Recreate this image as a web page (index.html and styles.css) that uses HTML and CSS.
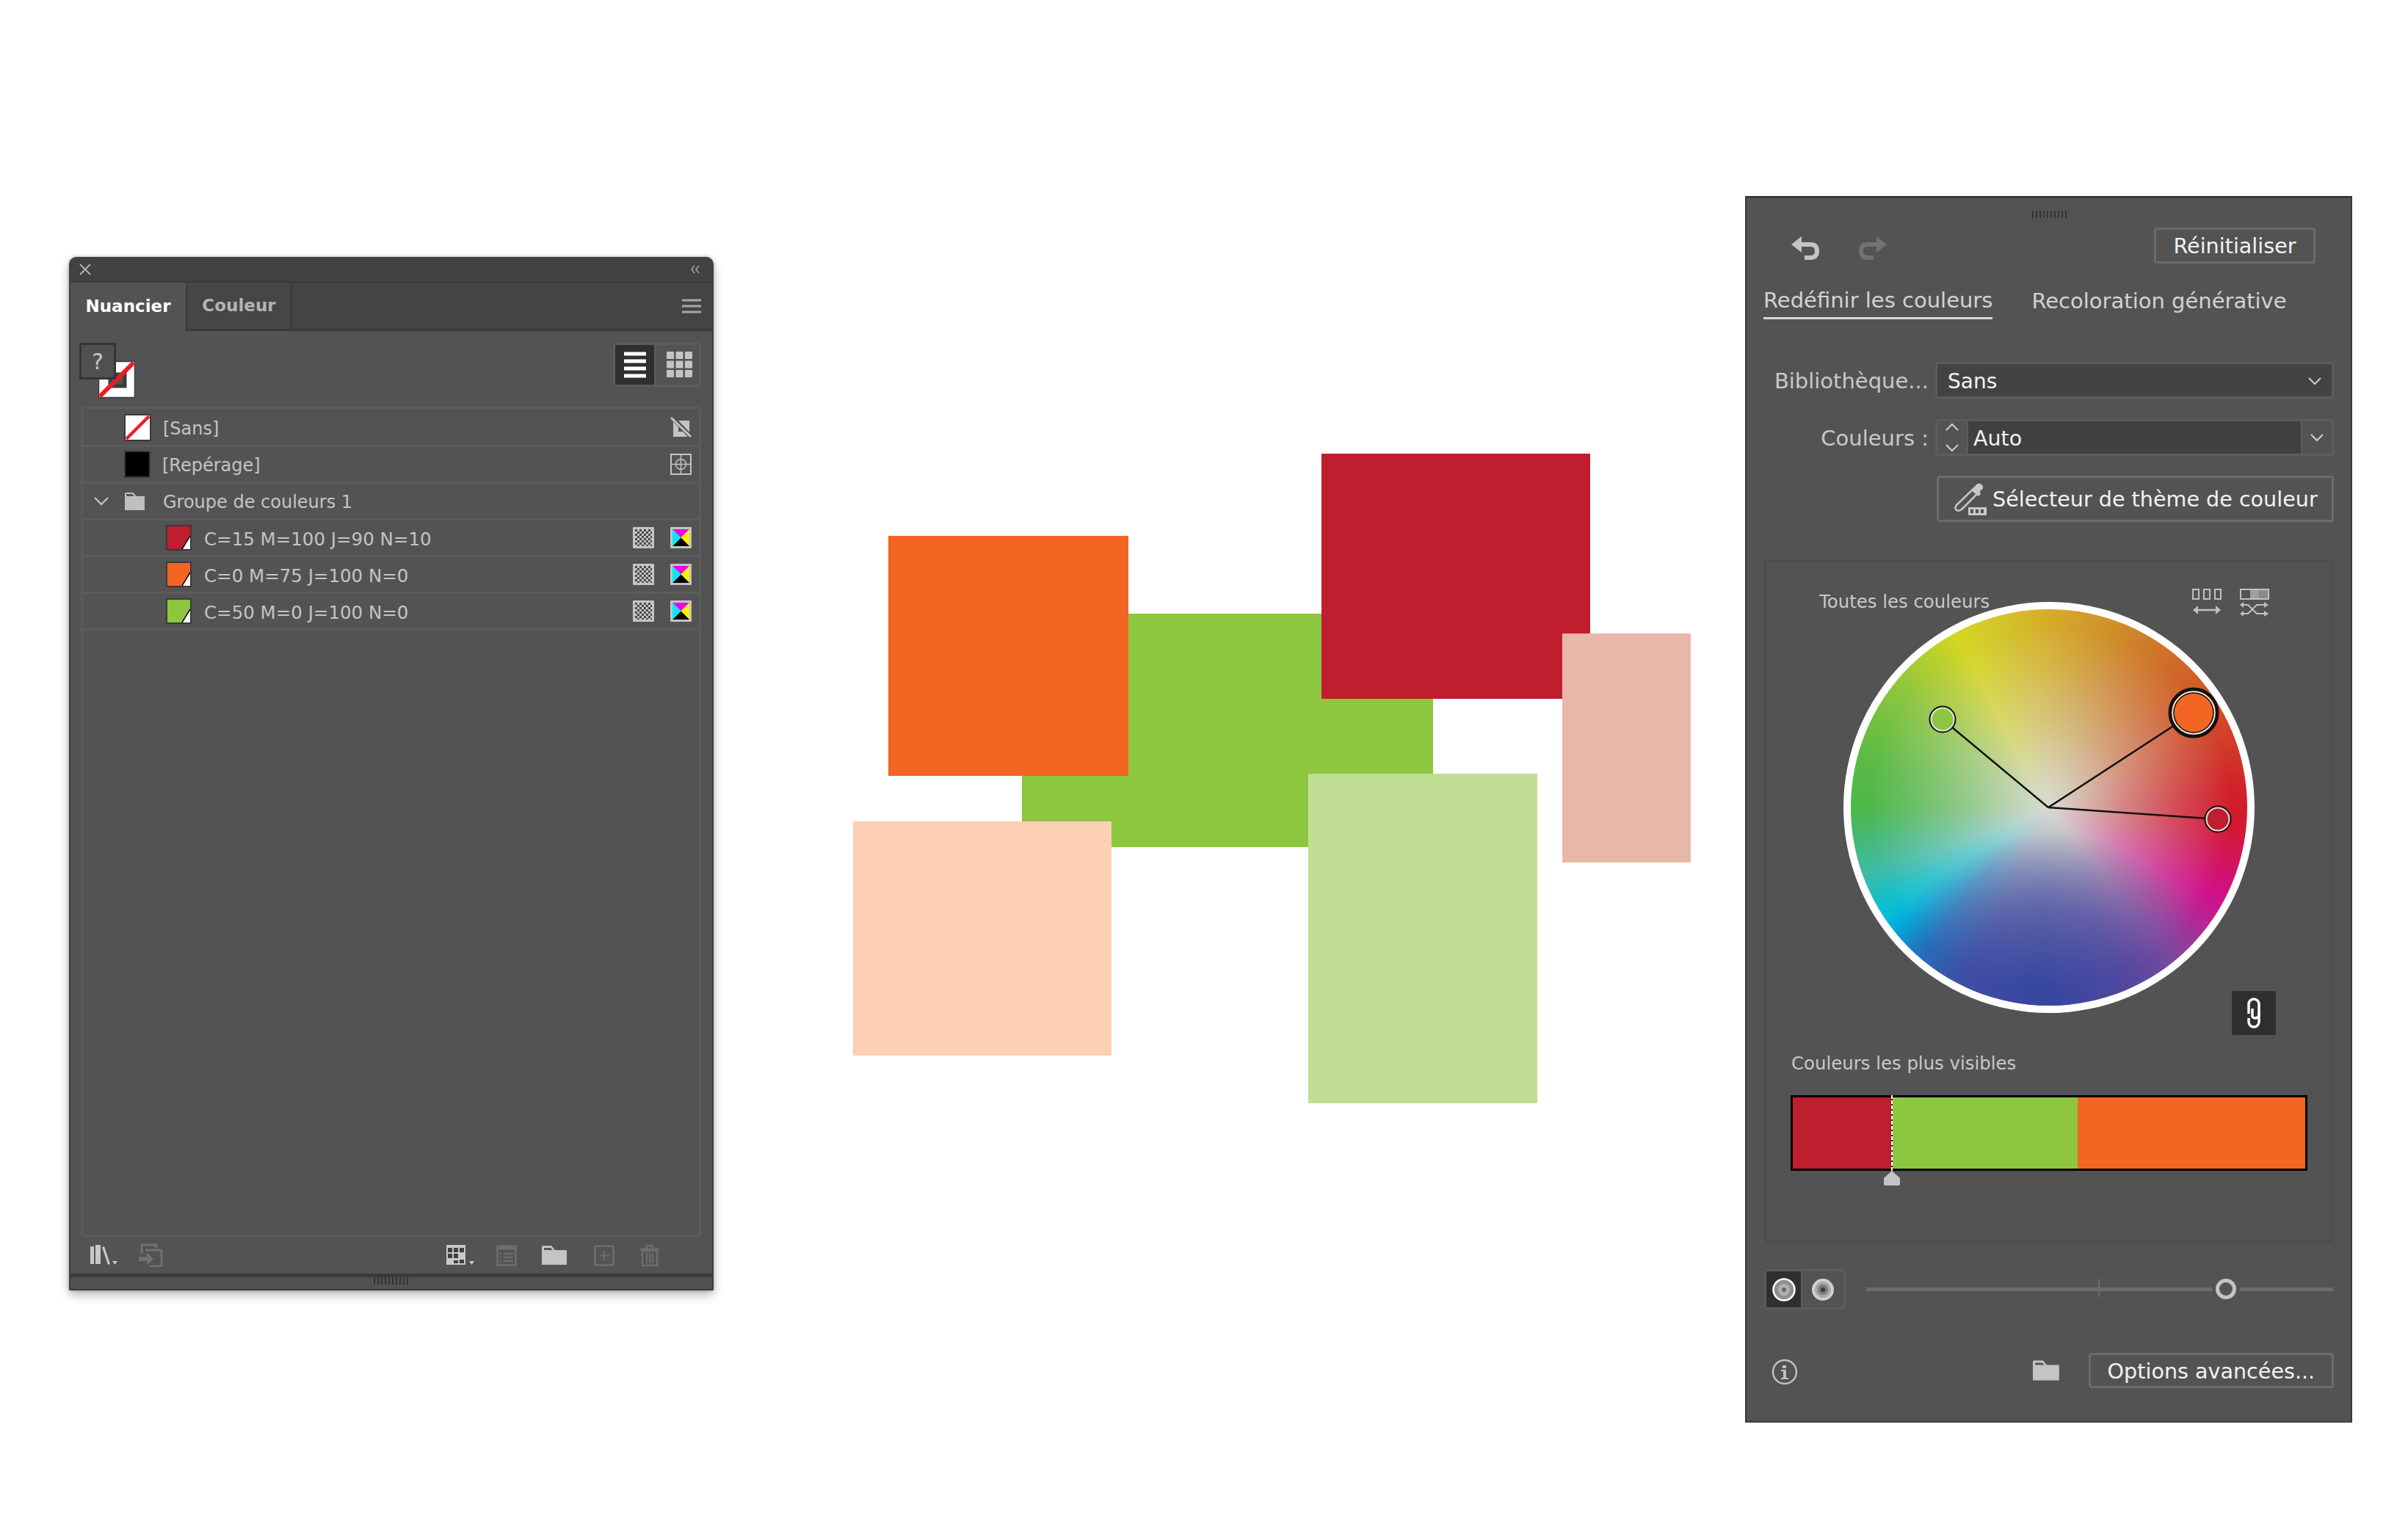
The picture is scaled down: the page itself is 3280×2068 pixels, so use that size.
FILE: index.html
```html
<!DOCTYPE html>
<html lang="fr">
<head>
<meta charset="utf-8">
<title>Redéfinir les couleurs</title>
<link rel="stylesheet" href="styles.css">
</head>
<body>
<main class="desk">

  <div class="shape s-green"></div>
  <div class="shape s-orange"></div>
  <div class="shape s-red"></div>
  <div class="shape s-pred"></div>
  <div class="shape s-porange"></div>
  <div class="shape s-pgreen"></div>

  <section class="swatches">
    <header class="sw-title">
      <svg class="ic" width="16" height="16" viewBox="0 0 16 16"><path d="M1 1l14 14M15 1L1 15" stroke="#b4b4b4" stroke-width="1.8" fill="none"/></svg>
      <svg class="ic" width="14" height="12" viewBox="0 0 14 12"><path d="M6 1L2 6l4 5M12 1L8 6l4 5" stroke="#a8a8a8" stroke-width="1.5" fill="none"/></svg>
    </header>
    <nav class="sw-tabs">
      <span class="sw-tab on">Nuancier</span>
      <span class="sw-tab">Couleur</span>
      <svg class="sw-menu" width="26" height="20" viewBox="0 0 26 20"><path d="M0 2h26M0 10h26M0 18h26" stroke="#a8a8a8" stroke-width="3"/></svg>
    </nav>
    <div class="sw-tools">
      <svg class="fillstroke" width="76" height="76" viewBox="0 0 76 76">
        <rect x="26.500" y="25.500" width="49" height="49" fill="#fff" stroke="#3c3c3c" stroke-width="1.500"/>
        <rect x="42" y="43" width="20" height="16" fill="#535353" stroke="#3a3a3a" stroke-width="5"/>
        <path d="M28 73L74 27" stroke="#ec1c24" stroke-width="6"/>
        <rect x="1.500" y="1.500" width="47" height="47" fill="#505050" stroke="#353535" stroke-width="3"/>
      </svg>
      <span class="qmark">?</span>
      <div class="views">
        <span class="view on">
          <svg width="32" height="36" viewBox="0 0 32 36"><path d="M1 3h30M1 13h30M1 23h30M1 33h30" stroke="#fff" stroke-width="5"/></svg>
        </span>
        <span class="view grid">
          <svg width="36" height="36" viewBox="0 0 36 36" fill="#c4c4c4"><rect width="10" height="10" rx="1"/><rect x="12.500" width="10" height="10" rx="1"/><rect x="25" width="10" height="10" rx="1"/><rect y="12.500" width="10" height="10" rx="1"/><rect x="12.500" y="12.500" width="10" height="10" rx="1"/><rect x="25" y="12.500" width="10" height="10" rx="1"/><rect y="25" width="10" height="10" rx="1"/><rect x="12.500" y="25" width="10" height="10" rx="1"/><rect x="25" y="25" width="10" height="10" rx="1"/></svg>
        </span>
      </div>
    </div>
    <div class="sw-list">
      <div class="row">
        <svg class="chip" width="37" height="37" viewBox="0 0 37 37"><rect x="1" y="1" width="35" height="35" fill="#fff" stroke="#3a3a3a" stroke-width="2"/><path d="M3 34L34 3" stroke="#ec1c24" stroke-width="4.500"/></svg>
        <span class="name">[Sans]</span>
        <svg class="end" width="29" height="29" viewBox="0 0 29 29"><path d="M4 5h22v22H4z" fill="#c4c4c4"/><path d="M11 12h8v8h-8z" fill="#535353"/><path d="M2 0l26 27" stroke="#535353" stroke-width="6"/><path d="M1 1l27 26" stroke="#c4c4c4" stroke-width="3"/></svg>
      </div>
      <div class="row">
        <span class="chip blk"></span>
        <span class="name">[Repérage]</span>
        <svg class="end" width="29" height="29" viewBox="0 0 29 29"><rect x="1" y="1" width="27" height="27" fill="none" stroke="#c4c4c4" stroke-width="2"/><circle cx="14.500" cy="14.500" r="7" fill="none" stroke="#c4c4c4" stroke-width="1.500"/><path d="M14.500 1v27M1 14.500h27" stroke="#c4c4c4" stroke-width="1.500"/></svg>
      </div>
      <div class="row">
        <svg class="twist" width="20" height="12" viewBox="0 0 20 12"><path d="M1 1l9 9 9-9" fill="none" stroke="#c8c8c8" stroke-width="2"/></svg>
        <svg class="gfolder" width="28" height="24" viewBox="0 0 28 24"><path d="M1 2q0-2 2-2h9l5 5h11v19H1z" fill="#c0c0c0"/><path d="M3 2h8l3 3H3z" fill="#535353"/></svg>
        <span class="name">Groupe de couleurs 1</span>
      </div>
      <div class="row sub">
        <svg class="chip" width="35" height="35" viewBox="0 0 35 35"><rect x="1" y="1" width="33" height="33" fill="#be1e2d" stroke="#3a3a3a" stroke-width="2"/><path d="M33 15v18H22z" fill="#fff"/><path d="M33 15L22 33" stroke="#000" stroke-width="1.500"/></svg>
        <span class="name">C=15 M=100 J=90 N=10</span>
        <svg class="end" width="29" height="29"><use href="#chk"/></svg>
        <svg class="end" width="29" height="29"><use href="#cmyk"/></svg>
      </div>
      <div class="row sub">
        <svg class="chip" width="35" height="35" viewBox="0 0 35 35"><rect x="1" y="1" width="33" height="33" fill="#f36523" stroke="#3a3a3a" stroke-width="2"/><path d="M33 15v18H22z" fill="#fff"/><path d="M33 15L22 33" stroke="#000" stroke-width="1.500"/></svg>
        <span class="name">C=0 M=75 J=100 N=0</span>
        <svg class="end" width="29" height="29"><use href="#chk"/></svg>
        <svg class="end" width="29" height="29"><use href="#cmyk"/></svg>
      </div>
      <div class="row sub">
        <svg class="chip" width="35" height="35" viewBox="0 0 35 35"><rect x="1" y="1" width="33" height="33" fill="#8dc63f" stroke="#3a3a3a" stroke-width="2"/><path d="M33 15v18H22z" fill="#fff"/><path d="M33 15L22 33" stroke="#000" stroke-width="1.500"/></svg>
        <span class="name">C=50 M=0 J=100 N=0</span>
        <svg class="end" width="29" height="29"><use href="#chk"/></svg>
        <svg class="end" width="29" height="29"><use href="#cmyk"/></svg>
      </div>
    </div>
    <footer class="sw-foot">
      <svg class="f-lib" width="37" height="28" viewBox="0 0 37 28"><path d="M0 2h5v24H0zM7 0h7v26H7zM16 3l3-1 8 24-3 1z" fill="#c8c8c8"/><path d="M30 22h7l-3.500 5z" fill="#c8c8c8"/></svg>
      <svg class="f-place" width="34" height="32" viewBox="0 0 34 32"><path d="M4 14V2h20v4M9 9h22v22H15" fill="none" stroke="#717171" stroke-width="3"/><path d="M0 18h11v-6l9 9-9 9v-6H0z" fill="#717171"/></svg>
      <svg class="f-kinds" width="38" height="28" viewBox="0 0 38 28"><rect width="26" height="27" fill="#c8c8c8"/><path d="M2 4h6v6H2zM10 4h6v6h-6zM18 4h6v6h-6zM2 12h6v6H2zM10 12h6v6h-6zM10 21h6v4h-6zM18 20h6v5h-6z" fill="#3e3e3e"/><path d="M31 22h7l-3.500 5z" fill="#c8c8c8"/></svg>
      <svg class="f-opts" width="28" height="29" viewBox="0 0 28 29"><rect x="1.500" y="1.500" width="25" height="26" fill="none" stroke="#6e6e6e" stroke-width="2.500"/><path d="M1 4h26" stroke="#6e6e6e" stroke-width="5"/><path d="M5 12h2M5 17h2M5 22h2M10 12h13M10 17h13M10 22h13" stroke="#6e6e6e" stroke-width="2.500"/></svg>
      <svg class="f-folder" width="34" height="26" viewBox="0 0 34 26"><use href="#fold"/></svg>
      <svg class="f-new" width="28" height="29" viewBox="0 0 28 29"><rect x="1.500" y="1.500" width="25" height="26" rx="1" fill="none" stroke="#6e6e6e" stroke-width="2.500"/><path d="M14 8v13M8 14.500h13" stroke="#6e6e6e" stroke-width="2"/></svg>
      <svg class="f-trash" width="28" height="30" viewBox="0 0 28 30"><path d="M1 7h26M10 6V2h8v4" fill="none" stroke="#6e6e6e" stroke-width="2.500"/><path d="M4 9h20v20H4z" fill="none" stroke="#6e6e6e" stroke-width="2.500"/><path d="M10 12v14M14 12v14M18 12v14" stroke="#6e6e6e" stroke-width="2"/></svg>
    </footer>
    <div class="sw-grip"><span class="grip"></span></div>
  </section>

  <section class="recolor">
    <div class="rc-grip"><span class="grip thin"></span></div>
    <div class="rc-top">
      <svg class="undo" width="40" height="34" viewBox="0 0 40 34"><path d="M14 0v8h12q12 0 12 12t-12 12h-8v-6h8q6 0 6-6t-6-6H14v8L0 11z" fill="#c4c4c4"/></svg>
      <svg class="redo" width="40" height="34" viewBox="0 0 40 34"><path d="M26 0v8H14Q2 8 2 20t12 12h8v-6h-8q-6 0-6-6t6-6h12v8l14-11z" fill="#727272"/></svg>
      <span class="btn reset">Réinitialiser</span>
    </div>
    <div class="rc-tabs">
      <span class="rc-tab on">Redéfinir les couleurs</span>
      <span class="rc-tab">Recoloration générative</span>
    </div>
    <div class="field lib">
      <label class="lbl">Bibliothèque...</label>
      <div class="select"><span>Sans</span><svg width="18" height="11" viewBox="0 0 18 11"><path d="M1 1l8 8 8-8" fill="none" stroke="#d0d0d0" stroke-width="2"/></svg></div>
    </div>
    <div class="field cnt">
      <label class="lbl">Couleurs :</label>
      <div class="combo">
        <span class="step"><svg width="20" height="48" viewBox="0 0 20 48"><path d="M2 14l8-8 8 8M2 34l8 8 8-8" fill="none" stroke="#d0d0d0" stroke-width="2"/></svg></span>
        <span class="cval">Auto</span>
        <span class="cdrop"><svg width="18" height="11" viewBox="0 0 18 11"><path d="M1 1l8 8 8-8" fill="none" stroke="#d0d0d0" stroke-width="2"/></svg></span>
      </div>
    </div>
    <div class="btn picker">
      <svg width="46" height="44" viewBox="0 0 46 44"><path d="M30 6l6 6-24 24q-4 3-7 1t0-7z" fill="none" stroke="#c8c8c8" stroke-width="2.500"/><path d="M26 11l4-4 1-4q4-4 8-1t1 7l-4 2 2 4-3 3z" fill="#c8c8c8"/><rect x="21" y="33" width="25" height="11" fill="#c8c8c8"/><path d="M24 36h4v5h-4zM31 36h4v5h-4zM38 36h4v5h-4z" fill="#535353"/></svg>
      <span>Sélecteur de thème de couleur</span>
    </div>
    <div class="harmony">
      <span class="cap all">Toutes les couleurs</span>
      <div class="wheel-tools">
        <svg width="40" height="36" viewBox="0 0 40 36" fill="none" stroke="#c0c0c0"><path d="M1 1h8v13H1zM16 1h8v13h-8zM31 1h8v13h-8z" stroke-width="2"/><path d="M6 29h28" stroke-width="2.500"/><path d="M8 23l-7 6 7 6zM32 23l7 6-7 6z" fill="#c0c0c0" stroke="none"/></svg>
        <svg width="40" height="36" viewBox="0 0 40 36" fill="none" stroke="#c0c0c0"><path d="M1 1h38v13H1z" stroke-width="2"/><path d="M14 2h12v11H14z" fill="#a0a0a0" stroke="none"/><path d="M26 2h12v11H26z" fill="#8a8a8a" stroke="none"/><path d="M3 22h8l12 12h12M3 34h8l12-12h12" stroke-width="2"/><path d="M33 18l6 4-6 4zM33 30l6 4-6 4zM5 18l-5 4 5 4zM5 30l-5 4 5 4z" fill="#c0c0c0" stroke="none"/></svg>
      </div>
      <div class="wheel">
        <div class="hue"></div>
        <div class="sat"></div>
        <svg class="spokes" width="560" height="560" viewBox="0 0 560 560">
          <path d="M279 280L135 160M279 280L477 151M279 280L510 296" stroke="#111" stroke-width="2.500" fill="none"/>
          <g stroke="#111" stroke-width="2">
            <circle cx="135" cy="160" r="16" fill="#8dc63f" stroke="#e6e6e6" stroke-width="3"/>
            <circle cx="135" cy="160" r="17.500" fill="none"/>
            <circle cx="510" cy="296" r="16" fill="#be1e2d" stroke="#f0dcdc" stroke-width="3"/>
            <circle cx="510" cy="296" r="17.500" fill="none"/>
          </g>
          <circle cx="477" cy="151" r="32" fill="none" stroke="#111" stroke-width="5"/>
          <circle cx="477" cy="151" r="28.500" fill="none" stroke="#fbe3d8" stroke-width="2.500"/>
          <circle cx="477" cy="151" r="27" fill="#f36523" stroke="#111" stroke-width="1.500"/>
        </svg>
      </div>
      <span class="link"><svg width="22" height="42" viewBox="0 0 22 42" fill="none" stroke="#fff" stroke-width="3.500"><path d="M4 22V9a7 7 0 0 1 14 0v14a5 5 0 0 1-9 3V15"/><path d="M18 20v13a7 7 0 0 1-14 0V28"/></svg></span>
      <span class="cap vis">Couleurs les plus visibles</span>
      <div class="bar">
        <span class="b-red"></span><span class="b-green"></span><span class="b-orange"></span>
        <span class="dash"></span>
        <svg class="stop" width="22" height="20" viewBox="0 0 22 20"><path d="M11 0l11 10v8q0 2-2 2H2q-2 0-2-2v-8z" fill="#c4c4c4"/></svg>
      </div>
    </div>
    <div class="sliderrow">
      <div class="mode">
        <span class="m on"><svg width="32" height="32" viewBox="0 0 32 32"><circle cx="16" cy="16" r="14" fill="#8f8f8f"/><circle cx="16" cy="16" r="8" fill="#b0b0b0"/><circle cx="16" cy="16" r="3" fill="#6a6a6a"/><circle cx="16" cy="16" r="14.500" fill="none" stroke="#fff" stroke-width="2.500"/></svg></span>
        <span class="m"><svg width="32" height="32" viewBox="0 0 32 32"><circle cx="16" cy="16" r="15" fill="#d0d0d0"/><circle cx="16" cy="16" r="11" fill="#a8a8a8"/><circle cx="16" cy="16" r="7" fill="#7a7a7a"/><circle cx="16" cy="16" r="3" fill="#3c3c3c"/></svg></span>
      </div>
      <div class="track">
        <span class="tick"></span>
        <span class="knob"></span>
      </div>
    </div>
    <div class="rc-foot">
      <svg width="36" height="36" viewBox="0 0 36 36"><circle cx="18" cy="18" r="16" fill="none" stroke="#c0c0c0" stroke-width="2.500"/><path d="M15 9h5v4h-5zM13 15h7v11h3v2H13v-2h3v-9h-3z" fill="#c0c0c0"/></svg>
      <svg class="rf-folder" width="36" height="28" viewBox="0 0 34 26"><use href="#fold"/></svg>
      <span class="btn adv">Options avancées...</span>
    </div>
  </section>

  <svg class="defs" width="0" height="0">
    <defs>
      <pattern id="ck" width="6" height="6" patternUnits="userSpaceOnUse"><rect width="6" height="6" fill="#c4c4c4"/><rect width="3" height="3" fill="#4a4a4a"/><rect x="3" y="3" width="3" height="3" fill="#4a4a4a"/></pattern>
      <symbol id="chk" viewBox="0 0 29 29"><rect width="29" height="29" rx="1" fill="#c4c4c4"/><rect x="3" y="3" width="23" height="23" fill="url(#ck)"/></symbol>
      <symbol id="cmyk" viewBox="0 0 29 29"><rect width="29" height="29" rx="1" fill="#c4c4c4"/><path d="M3 3h23L14.500 14.500z" fill="#ec00e8"/><path d="M26 3v23L14.500 14.500z" fill="#fff200"/><path d="M3 26h23L14.500 14.500z" fill="#000"/><path d="M3 3v23l11.500-11.500z" fill="#00eaf8"/></symbol>
      <symbol id="fold" viewBox="0 0 34 26"><path d="M0 2q0-2 2-2h11l5 6h16v20H0z" fill="#c4c4c4"/><path d="M3 3h9l3 3H3z" fill="#535353"/></symbol>
    </defs>
  </svg>
</main>
</body>
</html>
```
FILE: styles.css
```css
* { box-sizing: border-box; }
html, body { margin: 0; padding: 0; background: #fff; }
body { font-family: "DejaVu Sans", "Noto Sans", sans-serif; }
.desk { position: relative; width: 3280px; height: 2068px; overflow: hidden; background: #fff; }

.shape { position: absolute; }
.s-green { left: 1392px; top: 836px; width: 560px; height: 318px; background: #8dc63f; }
.s-orange { left: 1210px; top: 730px; width: 327px; height: 327px; background: #f36523; }
.s-red { left: 1800px; top: 618px; width: 366px; height: 334px; background: #be1e2d; }
.s-pred { left: 2128px; top: 863px; width: 175px; height: 312px; background: #e8b7a9; }
.s-porange { left: 1162px; top: 1119px; width: 352px; height: 319px; background: #fdd0b4; }
.s-pgreen { left: 1782px; top: 1054px; width: 312px; height: 449px; background: #c1de95; }

/* Nuancier panel */
.swatches { position: absolute; left: 94px; top: 350px; width: 878px; height: 1408px; display: flex; flex-direction: column; background: #535353; border-radius: 10px 10px 2px 2px; box-shadow: 0 6px 14px rgba(0,0,0,.28), 0 0 4px rgba(0,0,0,.25); border: solid #3f3f3f; border-width: 0 2px 2px 2px; overflow: visible; }
.sw-title { height: 33px; display: flex; align-items: center; justify-content: space-between; padding: 0 16px 0 12px; background: #424242; border-radius: 10px 10px 0 0; flex: none; }
.sw-tabs { height: 68px; display: flex; align-items: stretch; background: #444; border-top: 2px solid #3a3a3a; border-bottom: 3px solid #3a3a3a; flex: none; position: relative; }
.sw-tab { width: 143px; display: flex; align-items: center; justify-content: center; font-size: 23px; font-weight: 700; color: #b4b4b4; border-right: 2px solid #3a3a3a; background: #464646; padding-bottom: 2px; }
.sw-tab.on { width: 159px; color: #fff; background: #535353; margin-bottom: -3px; border-right: 2px solid #3a3a3a; }
.sw-menu { position: absolute; right: 15px; top: 22px; }
.sw-tools { height: 103px; flex: none; display: flex; justify-content: space-between; padding: 16px 15px 0 12px; position: relative; }
.fillstroke { display: block; }
.qmark { position: absolute; left: 12px; top: 16px; width: 50px; height: 50px; display: flex; align-items: center; justify-content: center; color: #c8c8c8; font-size: 30px; }
.views { width: 120px; height: 60px; display: flex; border: 3px solid #5c5c5c; border-radius: 4px; }
.view { display: flex; align-items: center; justify-content: center; }
.view.on { width: 56px; background: #2f2f2f; border-right: 3px solid #5c5c5c; flex: none; }
.view.grid { flex: 1; padding-left: 6px; }

.sw-list { flex: none; height: 1131px; margin: 0 15px 0 14px; padding-top: 2px; border: 3px solid #5b5b5b; border-radius: 5px; }
.row { height: 50px; display: flex; align-items: center; border-bottom: 3px solid #5b5b5b; padding-right: 10px; font-size: 24px; color: #c4c4c4; position: relative; }
.row .chip { margin-left: 56px; flex: none; }
.row .blk { width: 36px; height: 37px; background: #000; border: 2px solid #3a3a3a; }
.row .name { margin-left: 16px; flex: 1; white-space: nowrap; padding-top: 3px; }
.row.sub { font-size: 24.5px; }
.row.sub .chip { margin-left: 113px; }
.row.sub .name { margin-left: 17px; }
.row .end { flex: none; display: block; }
.row .end + .end { margin-left: 22px; }
.twist { margin-left: 15px; flex: none; }
.gfolder { margin-left: 21px; flex: none; }
.row .gfolder + .name { margin-left: 25px; }

.sw-foot { height: 50px; flex: none; display: flex; align-items: center; }
.f-lib { margin-left: 27px; }
.f-place { margin-left: 29px; }
.f-kinds { margin-left: 385px; }
.f-opts { margin-left: 30px; }
.f-folder { margin-left: 34px; }
.f-new { margin-left: 37px; }
.f-trash { margin-left: 34px; }
.sw-grip { flex: 1; border-top: 5px solid #3a3a3a; background: #515151; display: flex; justify-content: center; }
.grip { display: block; width: 48px; height: 10px; background: repeating-linear-gradient(90deg, #333 0 2px, transparent 2px 5px); }
.grip.thin { height: 10px; width: 49px; }

/* Recolor panel */
.recolor { position: absolute; left: 2377px; top: 267px; width: 827px; height: 1671px; background: #535353; border: 3px solid #3a3a3a; border-width: 3px 2px 2px 2px; display: flex; flex-direction: column; padding: 0 24px; }
.rc-grip { height: 27px; flex: none; display: flex; justify-content: center; align-items: flex-end; margin-right: -3px; }
.rc-top { height: 49px; margin-top: 13px; flex: none; display: flex; align-items: center; }
.undo { margin-left: 37px; margin-top: 8px; }
.redo { margin-left: 50px; margin-top: 8px; }
.btn { display: flex; align-items: center; justify-content: center; border: 3px solid #6b6b6b; border-radius: 4px; color: #f2f2f2; font-size: 28.600px; white-space: nowrap; padding-top: 1px; }
.reset { margin-left: auto; margin-right: 24px; width: 220px; height: 49px; }
.rc-tabs { margin-top: 23px; height: 53px; flex: none; display: flex; margin-left: -1px; font-size: 29px; color: #d2d2d2; }
.rc-tab { height: 53px; display: flex; align-items: center; white-space: nowrap; margin-right: 53px; padding-top: 3px; }
.rc-tab.on { border-bottom: 3px solid #d6d6d6; }
.field { display: flex; align-items: center; flex: none; margin-right: -1px; }
.lib { margin-top: 58px; height: 50px; }
.cnt { margin-top: 28px; height: 50px; }
.lbl { width: 233px; text-align: right; font-size: 29px; color: #c8c8c8; white-space: nowrap; flex: none; padding-right: 9px; padding-top: 2px; }
.select { flex: 1; height: 50px; background: #434343; border: 3px solid #5c5c5c; border-radius: 4px; display: flex; align-items: center; justify-content: space-between; padding: 2px 14px 0 14px; color: #f2f2f2; font-size: 28px; }
.combo { flex: 1; height: 50px; border: 3px solid #5c5c5c; border-radius: 4px; display: flex; align-items: stretch; color: #f2f2f2; font-size: 28.500px; }
.step { width: 42px; display: flex; align-items: center; justify-content: center; border-right: 2px solid #5c5c5c; }
.cval { flex: 1; background: #404040; display: flex; align-items: center; padding: 2px 0 0 7px; }
.cdrop { width: 42px; display: flex; align-items: center; justify-content: center; border-left: 2px solid #5c5c5c; }
.picker { margin-top: 27px; margin-left: 235px; margin-right: -1px; height: 63px; justify-content: flex-start; padding-left: 19px; gap: 8px; flex: none; }
.harmony { position: relative; margin-top: 51px; height: 931px; flex: none; border: 3px solid #4d4d4d; border-radius: 3px; }
.cap { position: absolute; font-size: 24.400px; color: #c8c8c8; white-space: nowrap; }
.all { left: 72px; top: 40px; z-index: 2; }
.vis { left: 34px; top: 669px; }
.wheel-tools { position: absolute; left: 580px; top: 37px; display: flex; gap: 25px; }
.wheel-tools svg { display: block; overflow: visible; }
.wheel { position: absolute; left: 105px; top: 55px; width: 560px; height: 560px; border-radius: 50%; background: #fff; }
.hue, .sat { position: absolute; inset: 10px; border-radius: 50%; }
.hue { background: conic-gradient(from 0deg, #d6ad2a 0deg, #d08e2a 20deg, #d06f28 38deg, #d24f28 60deg, #d1202b 85deg, #d3192f 95deg, #d10f8c 118deg, #8e4a9f 141deg, #5b4aa0 160deg, #36479f 183deg, #3a55a8 205deg, #1a7ec4 222deg, #00aedb 232deg, #08c0d4 238deg, #3dbba5 250deg, #4cb848 270deg, #5bbb45 285deg, #8cc63f 308deg, #d6d622 332deg, #d4c428 345deg, #d6ad2a 360deg); }
.sat { background: radial-gradient(circle 235px at 50% 100%, rgba(54,71,159,.7) 0%, rgba(70,70,160,.5) 55%, rgba(80,80,165,0) 100%), radial-gradient(circle closest-side, #d8dbd2 0%, rgba(216,219,208,.8) 18%, rgba(216,219,208,.52) 40%, rgba(216,219,208,.22) 68%, rgba(216,219,208,0) 92%); }
.spokes { position: absolute; left: 0; top: 0; }
.link { position: absolute; left: 634px; top: 585px; width: 60px; height: 60px; background: #2f2f2f; border-radius: 3px; display: flex; align-items: center; justify-content: center; }
.bar { position: absolute; left: 33px; top: 727px; width: 704px; height: 103px; border: 3px solid #000; display: flex; }
.b-red { width: 134px; background: #be1e2d; }
.b-green { width: 254px; background: #8dc63f; }
.b-orange { flex: 1; background: #f36523; }
.dash { position: absolute; left: 134px; top: -3px; height: 103px; width: 2px; background: repeating-linear-gradient(180deg, #fff 0 5px, #1a1a1a 5px 7px); }
.stop { position: absolute; left: 124px; top: 100px; }
.sliderrow { margin-top: 36px; height: 55px; display: flex; align-items: center; flex: none; }
.mode { width: 111px; height: 55px; display: flex; border: 3px solid #5c5c5c; border-radius: 4px; flex: none; }
.m { flex: 1; display: flex; align-items: center; justify-content: center; }
.m.on { flex: none; width: 49px; background: #2f2f2f; border-right: 2px solid #5c5c5c; }
.track { margin-left: 28px; flex: 1; height: 5px; background: #6c6c6c; position: relative; }
.tick { position: absolute; left: 316px; top: -12px; width: 2px; height: 25px; background: #6c6c6c; }
.knob { position: absolute; left: 471px; top: -17px; width: 38px; height: 38px; background: #535353; border-radius: 50%; display: block; padding: 0; }
.knob::after { content: ""; position: absolute; inset: 5px; border-radius: 50%; border: 5px solid #c4c4c4; }
.rc-foot { margin-top: 59px; height: 48px; display: flex; align-items: center; flex: none; padding-left: 10px; margin-right: -1px; }
.rc-foot > svg:first-child { margin-top: 4px; }
.rf-folder { margin-left: 320px; }
.adv { margin-left: 40px; width: 335px; height: 48px; }
.defs { position: absolute; }
```
